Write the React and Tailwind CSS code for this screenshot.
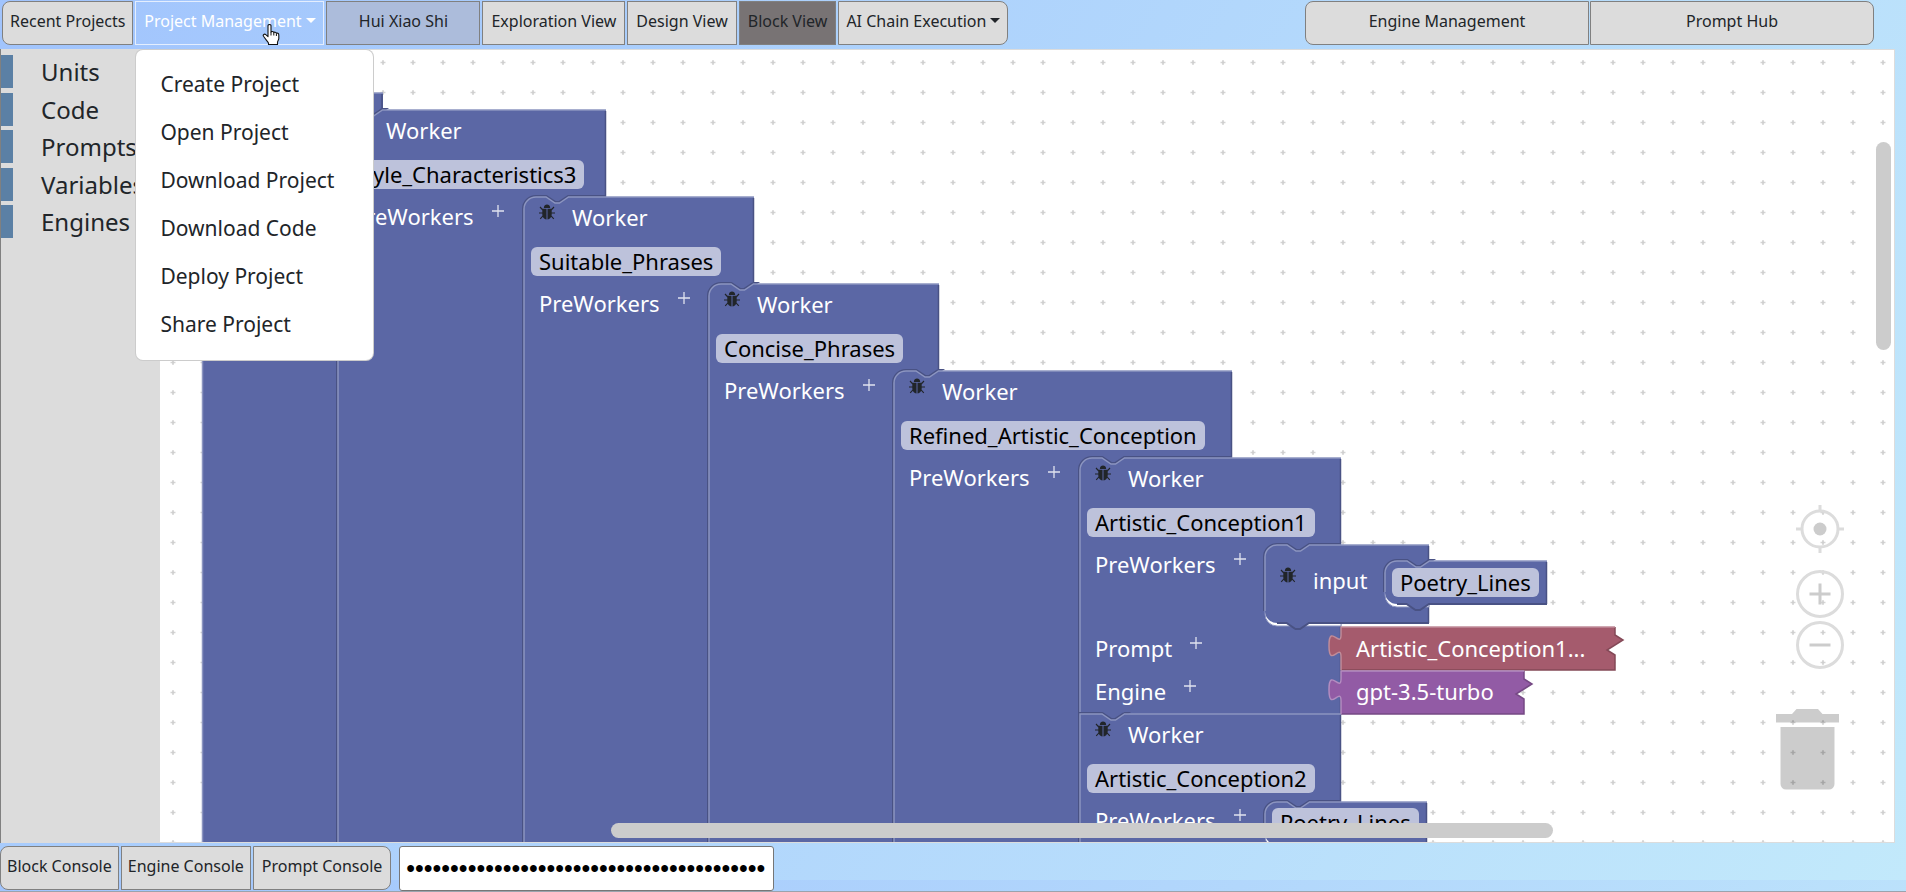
import React from "react";

const ORIGIN_X = 160;
const ORIGIN_Y = 50;

const topViews = [
  { label: "Exploration View", style: "bg-[#dcdcdc]" },
  { label: "Design View", style: "bg-[#dcdcdc]" },
  { label: "Block View", style: "bg-[#787374]" },
];

const projectMenu = [
  "Create Project",
  "Open Project",
  "Download Project",
  "Download Code",
  "Deploy Project",
  "Share Project",
];

const categories = ["Units", "Code", "Prompts", "Variables", "Engines"];

const consoles = [
  { label: "Block Console", style: "rounded-l-lg px-[6px]" },
  { label: "Engine Console", style: "px-[6px]" },
  { label: "Prompt Console", style: "rounded-r-lg px-2" },
];

const workers = [
  { x: 338, y: 110, right: 606, bottom: 860, parentRight: 383, name: "Style_Characteristics3" },
  { x: 524, y: 197, right: 754, bottom: 860, parentRight: 606, name: "Suitable_Phrases" },
  { x: 709, y: 284, right: 939, bottom: 860, parentRight: 754, name: "Concise_Phrases" },
  { x: 894, y: 371, right: 1232, bottom: 860, parentRight: 939, name: "Refined_Artistic_Conception" },
  { x: 1080, y: 458, right: 1341, bottom: 714, parentRight: 1232, name: "Artistic_Conception1", full: true },
  { x: 1080, y: 714, right: 1341, bottom: 860, parentRight: 1080, name: "Artistic_Conception2", flat: true },
];

function Caret() {
  return (
    <span className="mt-[9px] ml-1 h-0 w-0 border-x-[5px] border-t-[5px] border-x-transparent border-t-current" />
  );
}

function BarButton({ className, children, ...rest }) {
  return (
    <button
      type="button"
      className={
        "flex h-11 items-start justify-center border pt-[7px] text-[16px] leading-6 whitespace-nowrap " +
        className
      }
      {...rest}
    >
      {children}
    </button>
  );
}

function HandCursor() {
  return (
    <svg viewBox="0 0 18 22" className="pointer-events-none absolute top-[23px] left-[127px] h-[22px] w-[18px]">
      <path
        d="M6 1.5c0-1.3 3-1.3 3 0V8c.3-.8 2.6-.7 2.8.6.6-.8 2.4-.5 2.6.7.8-.5 2.4 0 2.4 1.6v3.6c0 1.600-1.300 2.500-1.300 4V20.500H6.500V19C5.500 17.500 3 14.500 1.500 12.300c-1-1.600 1-2.800 2.300-1.600L6 12.600z"
        fill="#fff"
        stroke="#111"
        strokeWidth="1.100"
        strokeLinejoin="round"
      />
      <path d="M9 8v3.500M11.800 9v2.500M14.400 9.500v2.500" stroke="#111" strokeWidth="1" />
    </svg>
  );
}

function TopBar() {
  return (
    <header className="relative z-20 flex h-[49px] items-start justify-between pt-px pl-0.5">
      <div className="flex gap-0.5">
        <BarButton className="rounded-l-lg border-[#808080] bg-[#dcdcdc] px-[7px]">Recent Projects</BarButton>
        <div className="relative">
          <BarButton
            className="w-[189px] border-[#e4eefe] text-white"
            aria-haspopup="menu"
            aria-expanded="true"
          >
            Project Management
            <Caret />
          </BarButton>
          <HandCursor />
          <ul
            role="menu"
            className="absolute top-full left-0 mt-1 w-[239px] rounded-lg border border-black/20 bg-white py-[11px]"
          >
            {projectMenu.map((item) => (
              <li key={item} role="none">
                <button
                  type="button"
                  role="menuitem"
                  className="flex h-12 w-full items-center px-6 text-left text-[21px] whitespace-nowrap"
                >
                  {item}
                </button>
              </li>
            ))}
          </ul>
        </div>
        <BarButton className="w-[154px] border-[#808080] bg-[#acbcdb]">Hui Xiao Shi</BarButton>
        {topViews.map((v) => (
          <BarButton key={v.label} className={"border-[#808080] px-2 " + v.style}>
            {v.label}
          </BarButton>
        ))}
        <BarButton className="rounded-r-lg border-[#808080] bg-[#dcdcdc] px-[7px]" aria-haspopup="menu">
          AI Chain Execution
          <Caret />
        </BarButton>
      </div>
      <div className="mr-8 flex gap-px">
        <BarButton className="w-[284px] rounded-l-lg border-[#808080] bg-[#dcdcdc]">Engine Management</BarButton>
        <BarButton className="w-[284px] rounded-r-lg border-[#808080] bg-[#dcdcdc]">Prompt Hub</BarButton>
      </div>
    </header>
  );
}

function Sidebar() {
  return (
    <nav className="w-40 shrink-0 overflow-hidden border-l border-[#808080] bg-[#dcdcdc] pt-[6px]">
      <div className="flex h-[183px] flex-col justify-between">
        {categories.map((c) => (
          <button
            key={c}
            type="button"
            className="flex h-[33px] items-center border-l-[12px] border-[#5b80a5] pl-[28px] text-[24px] leading-[33px]"
          >
            {c}
          </button>
        ))}
      </div>
    </nav>
  );
}

const NOTCH = "l 9,6 4.500,0 9,-6";
const topEdge = (b) =>
  b.flat
    ? `M ${b.x},${b.bottom} V ${b.y} H ${b.x + 22} ${NOTCH} H `
    : `M ${b.x},${b.bottom} V ${b.y + 12} a 12,12 0 0 1 12,-12 H ${b.x + 22} ${NOTCH} H `;

function StackShape({ block }) {
  const b = block;
  return (
    <g>
      <path
        d={topEdge(b) + Math.max(b.parentRight - 1, b.x + 44)}
        fill="none"
        stroke="#495284"
        strokeWidth="4"
      />
      <path d={`${topEdge(b)}${b.right} V ${b.bottom} Z`} fill="#5b67a5" />
      <path d={topEdge(b) + b.right} fill="none" stroke="#8c95c0" strokeWidth="1.500" />
      <path d={`M ${b.right - 0.5},${b.y + 1} V ${b.bottom}`} stroke="#495284" strokeWidth="1.500" />
    </g>
  );
}

function ClosedShape({ x, y, right, bottom, innerRight }) {
  const start = `M ${x},${bottom - 12} V ${y + 12} a 12,12 0 0 1 12,-12 H ${x + 22} ${NOTCH} H `;
  const under = `H ${x + 44} l -9,6 h -4.500 l -9,-6 H ${x + 12}`;
  return (
    <g>
      <path
        d={`M ${x},${y + 12} V ${bottom - 9} a 12,12 0 0 0 12,12 H ${innerRight} V ${bottom - 8} H ${x + 16} V ${y + 12} Z`}
        fill="#fff"
        stroke="#8c95c0"
        strokeWidth="1"
      />
      <path d={start + innerRight} fill="none" stroke="#495284" strokeWidth="4" />
      <path d={`${start}${right} V ${bottom} ${under} a 12,12 0 0 1 -12,-12 Z`} fill="#5b67a5" />
      <path d={`M ${right},${bottom} ${under}`} fill="none" stroke="#495284" strokeWidth="2" />
      <path d={`M ${right - 0.5},${y + 1} V ${bottom}`} stroke="#495284" strokeWidth="1.500" />
      <path d={start + right} fill="none" stroke="#8c95c0" strokeWidth="1.500" />
    </g>
  );
}

function ValueShape({ x, y, right, height, fill, dark, light }) {
  const bottom = y + height;
  const tab = "c 0,-15 -12,12 -12,-11.250 s 12,3.750 12,-11.250";
  const left = `M ${x},${bottom} V ${y + 30} ${tab} V ${y} H ${right}`;
  const teeth = "v 8 l 8,5 l -16,10 l 8,5";
  return (
    <g>
      <path d={`${left} ${teeth} V ${bottom} Z`} fill={fill} />
      <path d={`M ${right},${y} ${teeth} V ${bottom} H ${x}`} fill="none" stroke={dark} strokeWidth="1.500" />
      <path d={left} fill="none" stroke={light} strokeWidth="1.500" />
    </g>
  );
}

function BlockShapes() {
  return (
    <svg className="absolute inset-0 h-full w-full" aria-hidden="true">
      <defs>
        <pattern id="grid" x="-2" y="-3" width="30" height="30" patternUnits="userSpaceOnUse">
          <path d="M15 13v5M12.500 15.500h5" stroke="#d6d6d6" strokeWidth="1.500" />
          <circle cx="15" cy="15.500" r="1.200" fill="#cfcfcf" />
        </pattern>
      </defs>
      <rect width="100%" height="100%" fill="url(#grid)" />
      <g transform={`translate(${-ORIGIN_X} ${-ORIGIN_Y})`}>
        <path d="M202,860 V93 H383 V860 Z" fill="#5b67a5" />
        <path d="M202.500,860 V93 H383" fill="none" stroke="#8c95c0" strokeWidth="1.500" />
        <path d="M382,94 V112" stroke="#495284" strokeWidth="1.500" />
        {workers.map((w) => (
          <StackShape key={w.name} block={w} />
        ))}
        <ValueShape x={1341} y={627} right={1615} height={43} fill="#a55b6d" dark="#844957" light="#c08c99" />
        <ValueShape x={1341} y={671} right={1524} height={43} fill="#925ba5" dark="#754984" light="#b38cc0" />
        <ClosedShape x={1265} y={545} right={1429} bottom={623} innerRight={1341} />
        <ClosedShape x={1385} y={561} right={1547} bottom={604} innerRight={1429} />
        <ClosedShape x={1265} y={802} right={1427} bottom={845} innerRight={1341} />
      </g>
    </svg>
  );
}

function Bug() {
  return (
    <svg viewBox="0 0 16 16" className="mt-0.5 h-4 w-4" aria-hidden="true">
      <path
        d="M1 3L3.800 6M15 3L12.200 6M0 9H4M16 9H12M1.200 14.800L4 11.800M14.800 14.800L12 11.800"
        stroke="#212529"
        strokeWidth="1.100"
        fill="none"
      />
      <path d="M4.800 4C4.800-.6 11.200-.6 11.200 4Z" fill="#212529" />
      <path d="M3.300 4.800H7.500V15.500C4.500 15.200 3.300 12.500 3.300 10ZM12.700 4.800H8.500V15.500C11.500 15.200 12.700 12.500 12.700 10Z" fill="#212529" />
    </svg>
  );
}

function Chip({ children }) {
  return (
    <button
      type="button"
      className="block h-[29px] w-fit rounded-[6px] bg-[#bdc2db] px-2 text-[22px] leading-[29px] text-black"
    >
      {children}
    </button>
  );
}

function InputRow({ label, className }) {
  return (
    <div className={"flex pl-[15px] " + className}>
      <span className="leading-[30px]">{label}</span>
      <button type="button" aria-label={"Add to " + label} className="mt-1 ml-[18px] h-3 w-3">
        <svg viewBox="0 0 12 12" className="h-3 w-3">
          <path d="M6 0v12M0 6h12" stroke="#e1e3ef" strokeWidth="1.300" />
        </svg>
      </button>
    </div>
  );
}

function Node({ x, y, className = "", children }) {
  return (
    <div
      className={"absolute text-[22px] whitespace-nowrap text-white " + className}
      style={{ left: x - ORIGIN_X, top: y - ORIGIN_Y }}
    >
      {children}
    </div>
  );
}

function WorkerNode({ worker }) {
  return (
    <Node x={worker.x} y={worker.y} className="pt-[5px]">
      <div className="flex items-start gap-[17px] pl-[15px] leading-[30px]">
        <Bug />
        <span>Worker</span>
      </div>
      <div className="mt-[15px] pl-[7px]">
        <Chip>{worker.name}</Chip>
      </div>
      <InputRow label="PreWorkers" className="mt-3" />
      {worker.full && (
        <>
          <InputRow label="Prompt" className="mt-[54px]" />
          <InputRow label="Engine" className="mt-[13px]" />
        </>
      )}
    </Node>
  );
}

function ZoomControls() {
  return (
    <div className="absolute right-[50px] bottom-[173px] flex flex-col items-center">
      <button type="button" aria-label="Center workspace" className="mb-[17px]">
        <svg viewBox="0 0 48 48" className="h-12 w-12" fill="none">
          <circle cx="24" cy="24" r="18" stroke="#dcdcdc" strokeWidth="3" />
          <path d="M24 0v6M24 42v6M0 24h6M42 24h6" stroke="#dcdcdc" strokeWidth="3" />
          <circle cx="24" cy="24" r="6.500" fill="#ccc" />
        </svg>
      </button>
      <button type="button" aria-label="Zoom in" className="mb-[3px]">
        <svg viewBox="0 0 48 48" className="h-12 w-12" fill="none">
          <circle cx="24" cy="24" r="22.500" stroke="#dcdcdc" strokeWidth="3" />
          <path d="M24 13.500v21M13.500 24h21" stroke="#ccc" strokeWidth="3" />
        </svg>
      </button>
      <button type="button" aria-label="Zoom out">
        <svg viewBox="0 0 48 48" className="h-12 w-12" fill="none">
          <circle cx="24" cy="24" r="22.500" stroke="#dcdcdc" strokeWidth="3" />
          <path d="M13.500 24h21" stroke="#ccc" strokeWidth="3" />
        </svg>
      </button>
    </div>
  );
}

function Trash() {
  return (
    <button type="button" aria-label="Delete blocks" className="absolute right-[55px] bottom-[52px]">
      <svg viewBox="0 0 63 81" className="h-[81px] w-[63px]" fill="#000" fillOpacity="0.2">
        <path d="M0 5H16L20.500 0H42L46.500 5H63V13.500H0Z" />
        <path d="M4.500 18H58.500V75a5.500 5.500 0 0 1-5.500 5.500H10A5.500 5.500 0 0 1 4.500 75Z" />
      </svg>
    </button>
  );
}

function Workspace() {
  return (
    <section className="relative mr-[11px] flex-1 overflow-hidden border-t border-r border-b border-[#dcdcdc] bg-white">
      <BlockShapes />
      {workers.map((w) => (
        <WorkerNode key={w.name} worker={w} />
      ))}
      <Node x={1265} y={545} className="flex items-start gap-[17px] pt-5 pl-[15px] leading-[30px]">
        <Bug />
        <span>input</span>
      </Node>
      <Node x={1392} y={568}>
        <Chip>Poetry_Lines</Chip>
      </Node>
      <Node x={1272} y={808}>
        <Chip>Poetry_Lines</Chip>
      </Node>
      <Node x={1356} y={633} className="leading-[30px]">
        Artistic_Conception1...
      </Node>
      <Node x={1356} y={676} className="leading-[30px]">
        gpt-3.5-turbo
      </Node>
      <ZoomControls />
      <Trash />
      <div className="absolute top-[92px] right-[3px] h-[208px] w-[15px] rounded-full bg-[#ccc]" />
      <div className="absolute bottom-1 left-[451px] h-[15px] w-[942px] rounded-full bg-[#ccc]" />
    </section>
  );
}

function BottomBar() {
  return (
    <footer className="flex h-[49px] items-start border-b border-[#9aa3ad] pt-[3px]">
      <div className="flex gap-0.5">
        {consoles.map((c) => (
          <BarButton key={c.label} className={"border-[#808080] bg-[#dcdcdc] " + c.style}>
            {c.label}
          </BarButton>
        ))}
      </div>
      <input
        aria-label="API key"
        type="password"
        defaultValue={"k".repeat(41)}
        className="ml-2 h-[45px] w-[375px] rounded-[3px] border border-[#767676] bg-white px-[6px] font-['Liberation_Sans',sans-serif] text-[25px] text-black"
      />
    </footer>
  );
}

export default function App() {
  return (
    <div className="flex min-h-screen flex-col bg-linear-[120deg,#a1c4fd,#c2e9fb] bg-[length:100%_880px] font-['Noto_Sans','Noto_Sans_CJK_SC',sans-serif] text-[#212529]">
      <TopBar />
      <main className="flex flex-1">
        <Sidebar />
        <Workspace />
      </main>
      <BottomBar />
    </div>
  );
}
